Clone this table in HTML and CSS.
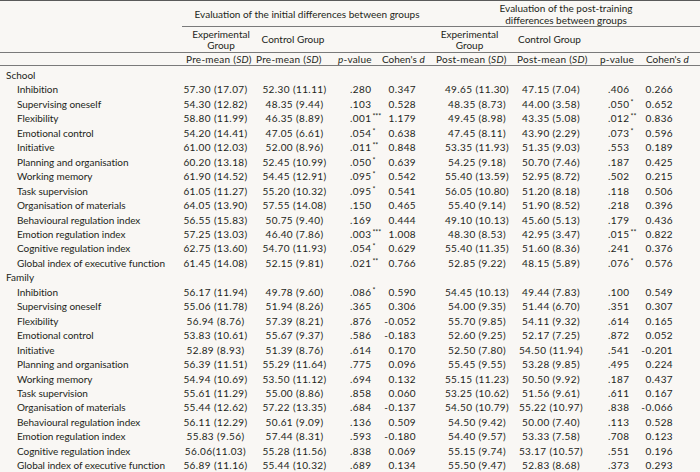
FILE: index.html
```html
<!DOCTYPE html>
<html lang="en">
<head>
<meta charset="utf-8">
<title>Executive function evaluation</title>
<link rel="stylesheet" href="styles.css">
</head>
<body>
<table class="results">
  <colgroup>
    <col class="w-label">
    <col class="w-c2">
    <col class="w-c3">
    <col class="w-c4">
    <col class="w-c5">
    <col class="w-c6">
    <col class="w-c7">
    <col class="w-c8">
    <col class="w-c9">
  </colgroup>
  <thead>
    <tr class="h1">
      <th class="blank"></th>
      <th colspan="4" class="group">Evaluation of the initial differences between groups</th>
      <th colspan="4" class="group">Evaluation of the post-training<br>differences between groups</th>
    </tr>
    <tr class="h2">
      <th class="blank"></th>
      <th class="sub exp1">Experimental<br>Group</th>
      <th class="sub ctl1">Control Group</th>
      <th class="sub"></th>
      <th class="sub"></th>
      <th class="sub exp2">Experimental<br>Group</th>
      <th class="sub ctl2">Control Group</th>
      <th class="sub"></th>
      <th class="sub"></th>
    </tr>
    <tr class="h3">
      <th class="blank"></th>
      <th class="mean">Pre-mean (<i>SD</i>)</th>
      <th class="mean">Pre-mean (<i>SD</i>)</th>
      <th class="pv"><i>p</i>-value</th>
      <th class="cd">Cohen's <i>d</i></th>
      <th class="mean">Post-mean (<i>SD</i>)</th>
      <th class="mean">Post-mean (<i>SD</i>)</th>
      <th class="pv">p-value</th>
      <th class="cd">Cohen's <i>d</i></th>
    </tr>
  </thead>
  <tbody id="rows"></tbody>
</table>
<script src="app.js"></script>
</body>
</html>
```

FILE: app.js
```js
const data = [
  ["School"],
  ["Inhibition","57.30 (17.07)","52.30 (11.11)",".280","","0.347","49.65 (11.30)","47.15 (7.04)",".406","","0.266"],
  ["Supervising oneself","54.30 (12.82)","48.35 (9.44)",".103","","0.528","48.35 (8.73)","44.00 (3.58)",".050","*","0.652"],
  ["Flexibility","58.80 (11.99)","46.35 (8.89)",".001","***","1.179","49.45 (8.98)","43.35 (5.08)",".012","**","0.836"],
  ["Emotional control","54.20 (14.41)","47.05 (6.61)",".054","*","0.638","47.45 (8.11)","43.90 (2.29)",".073","*","0.596"],
  ["Initiative","61.00 (12.03)","52.00 (8.96)",".011","**","0.848","53.35 (11.93)","51.35 (9.03)",".553","","0.189"],
  ["Planning and organisation","60.20 (13.18)","52.45 (10.99)",".050","*","0.639","54.25 (9.18)","50.70 (7.46)",".187","","0.425"],
  ["Working memory","61.90 (14.52)","54.45 (12.91)",".095","*","0.542","55.40 (13.59)","52.95 (8.72)",".502","","0.215"],
  ["Task supervision","61.05 (11.27)","55.20 (10.32)",".095","*","0.541","56.05 (10.80)","51.20 (8.18)",".118","","0.506"],
  ["Organisation of materials","64.05 (13.90)","57.55 (14.08)",".150","","0.465","55.40 (9.14)","51.90 (8.52)",".218","","0.396"],
  ["Behavioural regulation index","56.55 (15.83)","50.75 (9.40)",".169","","0.444","49.10 (10.13)","45.60 (5.13)",".179","","0.436"],
  ["Emotion regulation index","57.25 (13.03)","46.40 (7.86)",".003","***","1.008","48.30 (8.53)","42.95 (3.47)",".015","**","0.822"],
  ["Cognitive regulation index","62.75 (13.60)","54.70 (11.93)",".054","*","0.629","55.40 (11.35)","51.60 (8.36)",".241","","0.376"],
  ["Global index of executive function","61.45 (14.08)","52.15 (9.81)",".021","**","0.766","52.85 (9.22)","48.15 (5.89)",".076","*","0.576"],
  ["Family"],
  ["Inhibition","56.17 (11.94)","49.78 (9.60)",".086","*","0.590","54.45 (10.13)","49.44 (7.83)",".100","","0.549"],
  ["Supervising oneself","55.06 (11.78)","51.94 (8.26)",".365","","0.306","54.00 (9.35)","51.44 (6.70)",".351","","0.307"],
  ["Flexibility","56.94 (8.76)","57.39 (8.21)",".876","","-0.052","55.70 (9.85)","54.11 (9.32)",".614","","0.165"],
  ["Emotional control","53.83 (10.61)","55.67 (9.37)",".586","","-0.183","52.60 (9.25)","52.17 (7.25)",".872","","0.052"],
  ["Initiative","52.89 (8.93)","51.39 (8.76)",".614","","0.170","52.50 (7.80)","54.50 (11.94)",".541","","-0.201"],
  ["Planning and organisation","56.39 (11.51)","55.29 (11.64)",".775","","0.096","55.45 (9.55)","53.28 (9.85)",".495","","0.224"],
  ["Working memory","54.94 (10.69)","53.50 (11.12)",".694","","0.132","55.15 (11.23)","50.50 (9.92)",".187","","0.437"],
  ["Task supervision","55.61 (11.29)","55.00 (8.86)",".858","","0.060","53.25 (10.62)","51.56 (9.61)",".611","","0.167"],
  ["Organisation of materials","55.44 (12.62)","57.22 (13.35)",".684","","-0.137","54.50 (10.79)","55.22 (10.97)",".838","","-0.066"],
  ["Behavioural regulation index","56.11 (12.29)","50.61 (9.09)",".136","","0.509","54.50 (9.42)","50.00 (7.40)",".113","","0.528"],
  ["Emotion regulation index","55.83 (9.56)","57.44 (8.31)",".593","","-0.180","54.40 (9.57)","53.33 (7.58)",".708","","0.123"],
  ["Cognitive regulation index","56.06(11.03)","55.28 (11.56)",".838","","0.069","55.15 (9.74)","53.17 (10.57)",".551","","0.196"],
  ["Global index of executive function","56.89 (11.16)","55.44 (10.32)",".689","","0.134","55.50 (9.47)","52.83 (8.68)",".373","","0.293"]
];

const tbody = document.getElementById("rows");
const cls = ["c2","c3","c4","c5","c6","c7","c8","c9"];
data.forEach((r, i) => {
  const tr = document.createElement("tr");
  if (i === 0) tr.className = "first";
  if (r.length === 1) {
    const td = document.createElement("td");
    td.className = "section";
    td.textContent = r[0];
    tr.appendChild(td);
    const rest = document.createElement("td");
    rest.colSpan = 8;
    tr.appendChild(rest);
  } else {
    const label = document.createElement("td");
    label.className = "item";
    label.textContent = r[0];
    tr.appendChild(label);
    const vals = [r[1], r[2], [r[3], r[4]], r[5], r[6], r[7], [r[8], r[9]], r[10]];
    vals.forEach((v, k) => {
      const td = document.createElement("td");
      td.className = "num " + cls[k];
      if (Array.isArray(v)) {
        td.appendChild(document.createTextNode(v[0]));
        if (v[1]) {
          const s = document.createElement("sup");
          s.textContent = v[1];
          td.appendChild(s);
        }
      } else {
        td.textContent = v;
      }
      tr.appendChild(td);
    });
  }
  tbody.appendChild(tr);
});
```

FILE: styles.css
```css
html, body {
  margin: 0;
  padding: 0;
  background: #f9f7f4;
}
body {
  width: 700px;
  height: 472px;
  overflow: hidden;
  font-family: Lato, "Liberation Sans", sans-serif;
  font-size: 10px;
  color: #231f20;
}
.results {
  width: 700px;
  table-layout: fixed;
  border-collapse: separate;
  border-spacing: 0;
  border-top: 1px solid #5a5a5a;
}
.w-label { width: 182px; }
.w-c2 { width: 70px; }
.w-c3 { width: 80px; }
.w-c4 { width: 45px; }
.w-c5 { width: 55px; }
.w-c6 { width: 81px; }
.w-c7 { width: 81px; }
.w-c8 { width: 47px; }
.w-c9 { width: 59px; }

th, td {
  padding: 0;
  font-weight: normal;
  white-space: nowrap;
}
i { font-style: italic; }

.h1 th {
  height: 25px;
  line-height: 12px;
  text-align: center;
  vertical-align: middle;
}
.h1 th.group { border-bottom: 1px solid #7a7a7a; }

.h2 th {
  height: 25px;
  line-height: 10.5px;
  text-align: center;
  vertical-align: middle;
  border-bottom: 1px solid #7a7a7a;
}
.h2 .exp1 { padding-left: 8px; }
.h2 .ctl1 { padding-left: 2px; }
.h2 .exp2 { padding-right: 6px; }
.h2 .ctl2 { padding-right: 8px; }

.h3 th {
  height: 12px;
  line-height: 12px;
  text-align: left;
  padding-left: 4px;
  border-bottom: 1px solid #7a7a7a;
}
.h3 th.blank { padding-left: 0; }
.h3 th.mean { letter-spacing: 0.25px; }
.h3 th.pv { padding-left: 6px; letter-spacing: 0.2px; }
.h3 th.cd { padding-left: 5px; }

tbody td {
  line-height: 14.45px;
  height: 14.45px;
}
tbody tr.first td { padding-top: 2px; }

.section { padding-left: 6px; }
.item { padding-left: 17px; letter-spacing: -0.05px; }
.num { letter-spacing: 0.4px; }

.c2 { text-align: center; padding-right: 3px; }
.c3 { text-align: center; padding-left: 5px; }
.c4 { text-align: left; padding-left: 18px; }
.c5 { text-align: right; padding-right: 16px; }
.c6 { text-align: center; padding-left: 9px; }
.c7 { text-align: center; padding-right: 5px; }
.c8 { text-align: left; padding-left: 14px; }
.c9 { text-align: right; padding-right: 27px; }

sup {
  font-size: 7px;
  line-height: 0;
  letter-spacing: 0;
  vertical-align: 3px;
  margin-left: 1px;
}
```
